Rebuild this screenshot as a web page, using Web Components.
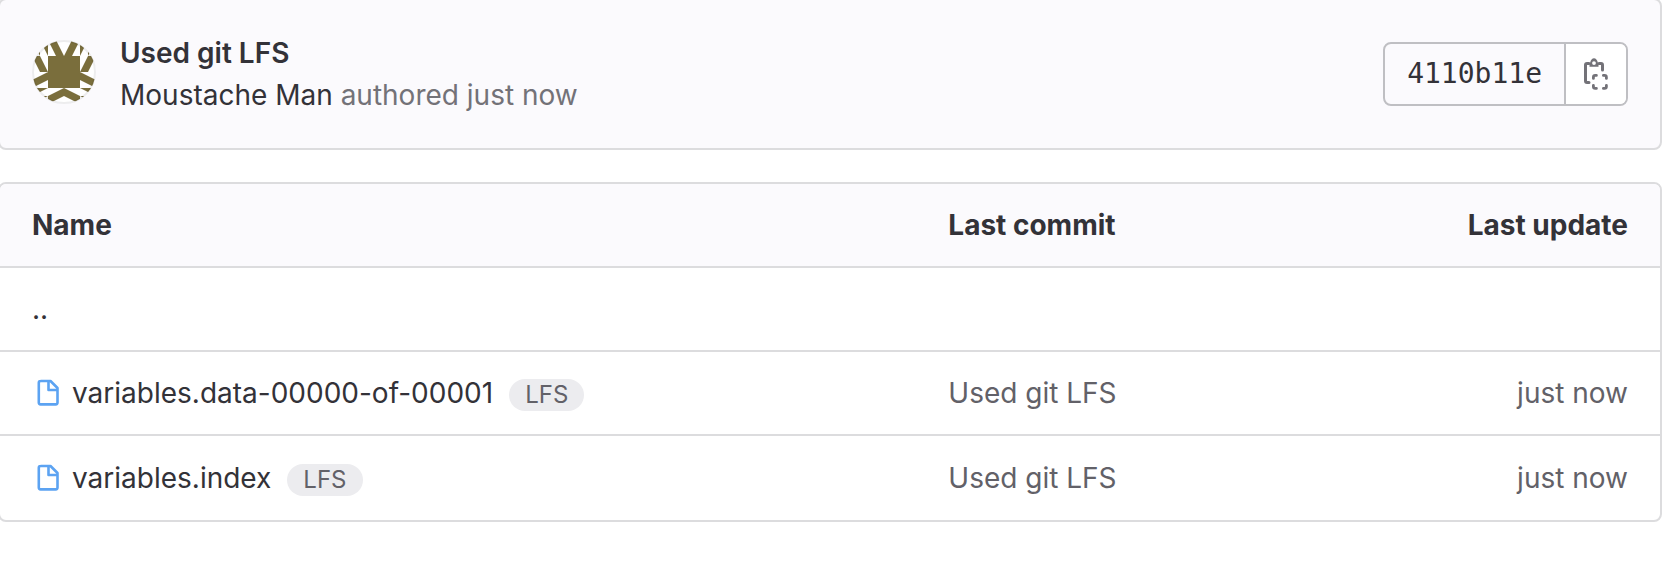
<!DOCTYPE html>
<html lang="en">
<head>
<meta charset="utf-8">
<title>Repository files</title>
<style>
body { margin: -2px 12px 0 -2px; background: #fff; color: #333238; font: 28px/42px Inter, "Liberation Sans", sans-serif; }
</style>
</head>
<body>
<repo-page></repo-page>

<template id="tpl-page">
<style>
:host { display: flex; flex-direction: column; gap: 32px; }
</style>
<commit-panel sha="4110b11e">
  <user-identicon slot="avatar"></user-identicon>
  <span slot="title">Used git LFS</span>
  <span slot="author">Moustache Man</span>
  <span slot="when">authored just now</span>
</commit-panel>
<file-tree></file-tree>
</template>

<template id="tpl-commit">
<style>
:host { display: flex; align-items: center; justify-content: space-between; box-sizing: border-box; padding: 32px; border: 2px solid #dcdcde; border-radius: 8px; background: #fbfafd; }
.info { display: flex; align-items: flex-start; gap: 24px; }
::slotted(user-identicon) { margin-top: 8px; }
a { color: inherit; text-decoration: none; }
.title { font-weight: 600; }
.meta { color: #737278; }
.meta a { color: #333238; }
</style>
<div class="info">
  <slot name="avatar"></slot>
  <div>
    <div class="title"><a href="#commit"><slot name="title"></slot></a></div>
    <div class="meta"><a href="#author"><slot name="author"></slot></a> <slot name="when"></slot></div>
  </div>
</div>
<sha-group></sha-group>
</template>

<template id="tpl-sha">
<style>
:host { display: flex; box-sizing: border-box; height: 64px; border: 2px solid #bfbfc3; border-radius: 8px; overflow: hidden; }
.sha { display: flex; align-items: center; padding: 0 22px; font: 28px/32px "DejaVu Sans Mono", monospace; }
button { display: flex; align-items: center; justify-content: center; box-sizing: border-box; width: 62px; margin: 0; padding: 0; border: 0; border-left: 2px solid #bfbfc3; background: #fff; color: #737278; }
</style>
<span class="sha"></span>
<button type="button" aria-label="Copy commit SHA">
<svg width="32" height="32" viewBox="0 0 32 32" fill="none" stroke="currentColor" stroke-width="3" stroke-linecap="round" stroke-linejoin="round">
<path d="M9 24.500H7q-1.500 0-1.500-1.500V7q0-1.500 1.500-1.500H9M19 5.500h2q1.500 0 1.500 1.500V12" />
<path fill="currentColor" stroke="none" fill-rule="evenodd" d="M9.500 8.800V6q0-1.500 .7-1.500C10.700 1.800 12.200.2 14 .2s3.300 1.600 3.800 4.300Q18.500 4.500 18.500 6V8.800ZM14 3.200a1.900 1.900 0 1 0 0 3.800 1.900 1.900 0 0 0 0-3.800Z"/>
<path stroke-width="2.800" d="M13.400 20.400v-1.200q0-1.800 1.800-1.800h1.200M23.400 17.400h1.200q1.800 0 1.800 1.800v1.200M26.400 27.400v1.200q0 1.800-1.800 1.800h-1.200M16.400 30.400h-1.200q-1.800 0-1.800-1.800v-1.200"/>
</svg>
</button>
</template>

<template id="tpl-identicon">
<style>
:host { display: block; width: 64px; height: 64px; }
svg { display: block; }
</style>
<svg width="64" height="64" viewBox="0 0 64 64" aria-hidden="true">
<defs>
<clipPath id="c"><circle cx="32" cy="32" r="31.500"/></clipPath>
<path id="half" d="M16 16h16v32H16zM16 0h8l8 16h-8ZM8 0h8v16ZM0 0h8v16ZM0 16h8l8 16H8ZM0 40l16-8v8L0 48ZM0 48h16L0 56ZM0 56h16L0 64ZM16 56l16-8v8l-16 8Z"/>
</defs>
<circle cx="32" cy="32" r="32" fill="#fff"/>
<g clip-path="url(#c)" fill="#7a6e3c">
<use href="#half"/>
<use href="#half" transform="matrix(-1 0 0 1 64 0)"/>
</g>
<circle cx="32" cy="32" r="31" fill="none" stroke="#1f1e24" stroke-opacity=".08" stroke-width="2"/>
</svg>
</template>

<template id="tpl-tree">
<style>
:host { display: block; border: 2px solid #dcdcde; border-radius: 8px; overflow: hidden; }
table { width: 100%; border-collapse: separate; border-spacing: 0; table-layout: fixed; }
th, td { box-sizing: border-box; height: 84px; padding: 0 32px; border-bottom: 2px solid #dcdcde; text-align: left; font-weight: 400; }
thead th { background: #fbfafd; font-weight: 700; }
tbody tr:last-child > * { border-bottom: 0; }
.name { width: 55.2%; }
.commit { width: 25%; }
td { color: #626168; }
thead .update, .update { text-align: right; }
a { color: inherit; text-decoration: none; }
</style>
<table>
<thead><tr><th class="name" scope="col">Name</th><th class="commit" scope="col">Last commit</th><th class="update" scope="col">Last update</th></tr></thead>
<tbody>
<tr><th scope="row"><a href="#parent" aria-label="Go to parent">..</a></th><td></td><td></td></tr>
<tr><th scope="row"><file-name>variables.data-00000-of-00001</file-name></th><td><a href="#commit">Used git LFS</a></td><td class="update">just now</td></tr>
<tr><th scope="row"><file-name>variables.index</file-name></th><td><a href="#commit">Used git LFS</a></td><td class="update">just now</td></tr>
</tbody>
</table>
</template>

<template id="tpl-file">
<style>
:host { display: flex; align-items: center; gap: 16px; }
a { display: flex; align-items: center; gap: 8px; color: inherit; text-decoration: none; }
.badge { margin-top: 3px; padding: 0 16px; border-radius: 16px; background: #ececef; color: #626168; font-size: 24px; line-height: 32px; }
</style>
<a href="#file">
<svg width="32" height="32" viewBox="0 0 32 32" fill="none" stroke="#5ca3f2" stroke-width="2.600" stroke-linejoin="round" aria-hidden="true">
<path d="M8.500 4H18.500L25.500 11V25.600Q25.500 27.400 23.700 27.400H8.600Q6.800 27.400 6.800 25.600V5.800Q6.800 4 8.600 4M16.500 4V13H25.500"/>
</svg>
<span><slot></slot></span>
</a>
<span class="badge">LFS</span>
</template>

<script>
function define(name, templateId, setup) {
  customElements.define(name, class extends HTMLElement {
    constructor() {
      super();
      const root = this.attachShadow({ mode: "open" });
      root.append(document.getElementById(templateId).content.cloneNode(true));
    }
    connectedCallback() {
      if (setup) setup(this);
    }
  });
}
define("sha-group", "tpl-sha", el => {
  el.shadowRoot.querySelector(".sha").textContent = el.getAttribute("value");
});
define("user-identicon", "tpl-identicon");
define("commit-panel", "tpl-commit", el => {
  const group = document.createElement("sha-group");
  group.setAttribute("value", el.getAttribute("sha"));
  el.shadowRoot.querySelector("sha-group").replaceWith(group);
});
define("file-name", "tpl-file");
define("file-tree", "tpl-tree");
define("repo-page", "tpl-page");
</script>
</body>
</html>
